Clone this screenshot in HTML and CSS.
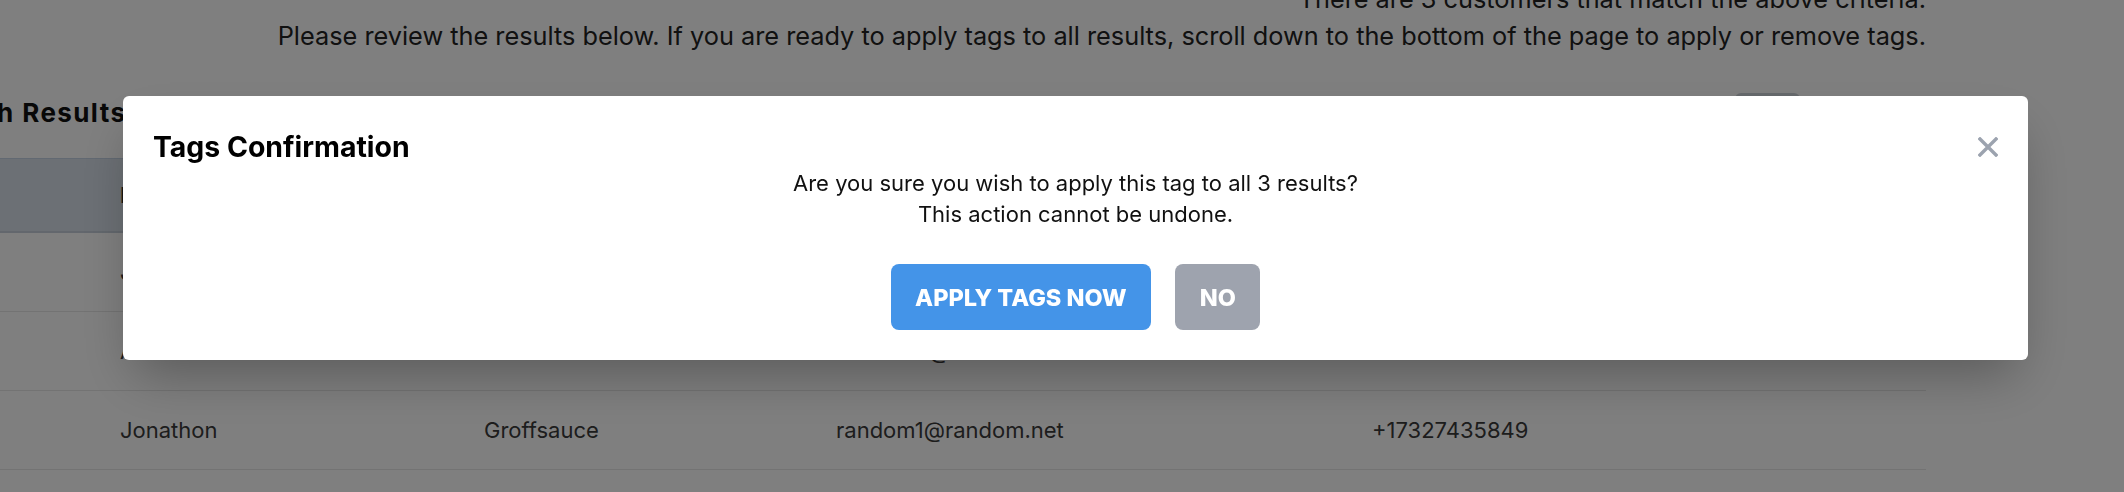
FILE: index.html
```html
<!DOCTYPE html>
<html lang="en">
<head>
    <meta charset="UTF-8">
    <meta name="viewport" content="width=device-width, initial-scale=1.0">
    <title>Search Results</title>
    <link rel="stylesheet" href="styles.css">
</head>
<body>

<div class="page">
    <!-- Resumo da busca -->
    <div class="summary">
        <p>There are 3 customers that match the above criteria.</p>
        <p>Please review the results below. If you are ready to apply tags to all results, scroll down to the bottom of the page to apply or remove tags.</p>
    </div>

    <div class="results-head">
        <h2>Search Results</h2>
        <button type="button" class="btn-export">Export</button>
    </div>

    <!-- Tabela de resultados -->
    <table class="results">
        <thead>
            <tr>
                <th>First Name</th>
                <th>Last Name</th>
                <th>Email</th>
                <th>Phone Number</th>
            </tr>
        </thead>
        <tbody>
            <tr>
                <td>Jessica</td>
                <td>Marlowe</td>
                <td>random3@random.net</td>
                <td>+17325550182</td>
            </tr>
            <tr>
                <td>Andrew</td>
                <td>Pellman</td>
                <td>random2@random.net</td>
                <td>+17325559031</td>
            </tr>
            <tr>
                <td>Jonathon</td>
                <td>Groffsauce</td>
                <td>random1@random.net</td>
                <td>+17327435849</td>
            </tr>
            <tr>
                <td>Margaret</td>
                <td>Holloway</td>
                <td>random4@random.net</td>
                <td>+17325557714</td>
            </tr>
        </tbody>
    </table>
</div>

<!-- Modal de confirmação -->
<div class="overlay">
    <div class="modal">
        <div class="modal-head">
            <h3>Tags Confirmation</h3>
            <button type="button" class="modal-close" aria-label="Close">
                <svg width="20" height="20" viewBox="0 0 20 20">
                    <path d="M2 2 L18 18 M18 2 L2 18" stroke="#9ca3af" stroke-width="3.4" stroke-linecap="square"/>
                </svg>
            </button>
        </div>
        <p class="modal-text">Are you sure you wish to apply this tag to all 3 results?<br>This action cannot be undone.</p>
        <div class="modal-actions">
            <button type="button" class="btn btn-apply">APPLY TAGS NOW</button>
            <button type="button" class="btn btn-no">NO</button>
        </div>
    </div>
</div>

</body>
</html>
```
FILE: styles.css
```css
/* Estilos Gerais */
body {
    font-family: Inter, "Open Sans", sans-serif;
    background-color: #ffffff;
    color: #222;
    margin: 0;
    overflow: hidden;
}

/* Página rolada: o conteúdo começa fora da tela */
.page {
    width: 1992px;
    margin: -20px 0 0 -66px;
}

.summary {
    text-align: right;
    font-size: 25.3px;
    line-height: 37px;
}

.summary p {
    margin: 0;
}

.results-head {
    display: flex;
    align-items: center;
    height: 40px;
    margin-top: 39px;
}

.results-head h2 {
    flex: 1;
    margin: 0 0 0 -17px;
    font-size: 26px;
    font-weight: 700;
    letter-spacing: 1.4px;
    line-height: 36px;
    color: #111;
}

.btn-export {
    width: 65px;
    height: 40px;
    margin-right: 126px;
    border: none;
    border-radius: 6px;
    background-color: #cdd2d9;
    color: transparent;
}

/* Estilo da Tabela */
.results {
    width: 100%;
    margin-top: 25px;
    border-collapse: collapse;
    table-layout: fixed;
    font-size: 22px;
    color: #3a3a3a;
}

.results th,
.results td {
    padding: 0 0 0 30px;
    text-align: left;
}

.results th:nth-child(1),
.results td:nth-child(1) {
    width: 334px;
    padding-left: 186px;
}

.results th:nth-child(2) { width: 322px; }
.results th:nth-child(3) { width: 506px; }

.results thead tr {
    background-color: #d8e0ea;
    border-top: 1px solid #c4d2e4;
    border-bottom: 2px solid #c6cfda;
}

.results th {
    height: 72px;
    font-weight: 600;
    color: #2d2d2d;
}

.results tbody tr {
    border-bottom: 1px solid #e6e6e6;
}

.results td {
    height: 78px;
}

/* Modal */
.overlay {
    position: fixed;
    top: 0;
    left: 0;
    right: 0;
    bottom: 0;
    background-color: rgba(0, 0, 0, 0.5);
}

.modal {
    margin: 96px 96px 0 123px;
    padding: 30px;
    background: #ffffff;
    border-radius: 6px;
    box-shadow: 0 25px 50px -12px rgba(0, 0, 0, 0.3);
}

.modal-head {
    display: flex;
    align-items: center;
    justify-content: space-between;
}

.modal-head h3 {
    margin: 0;
    font-size: 28.4px;
    font-weight: 700;
    line-height: 42px;
    color: #000;
}

.modal-close {
    display: flex;
    padding: 0;
    border: none;
    background: none;
    cursor: pointer;
}

.modal-text {
    margin: 0;
    text-align: center;
    font-size: 22px;
    line-height: 31px;
    color: #111;
}

.modal-actions {
    display: flex;
    justify-content: center;
    gap: 24px;
    margin-top: 34px;
}

.btn {
    height: 66px;
    padding: 0 24.5px;
    border: none;
    border-radius: 8px;
    font-family: Inter, "Open Sans", sans-serif;
    font-size: 23.5px;
    font-weight: 800;
    color: #ffffff;
    cursor: pointer;
}

.btn-apply {
    background-color: #4494e8;
}

.btn-no {
    background-color: #9ea3ae;
}
```
